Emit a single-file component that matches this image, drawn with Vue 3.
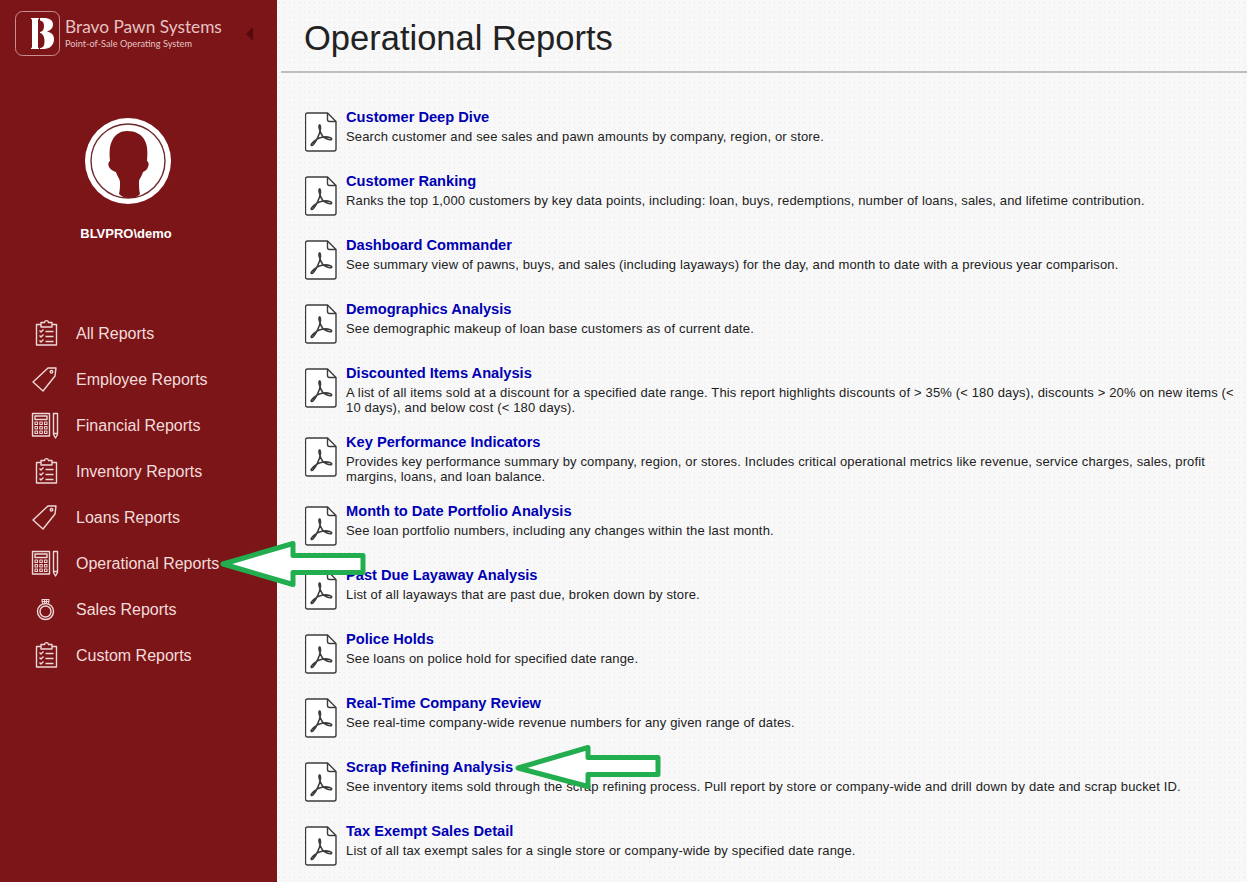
<template>
  <div class="layout">
    <aside class="sidebar">
      <div class="brand">
        <svg class="logo" viewBox="0 0 45 45">
          <rect x="0.500" y="0.500" width="44" height="44" rx="7" fill="none" stroke="#c98f90" />
          <path d="M16 7h8v1l-1 .5v28l1 .5v1h-8v-1l1-.5v-28l-1-.5z" fill="#fff" />
          <path
            d="M25 7h3.500c6.500 0 9.500 2.500 9.500 6.500 0 3.500-2.500 6-6 7 4.500.8 7 3.500 7 7.500 0 6-4 10-10.500 10H25v-1c3 0 4.500-2 4.500-7 0-4-1.500-7.500-4.500-8v-1c3-.5 4-3 4-6 0-3-1-5-4-5.500z"
            fill="#fff"
          />
        </svg>
        <div class="brand-text">
          <div class="brand-name">Bravo Pawn Systems</div>
          <div class="brand-sub">Point-of-Sale Operating System</div>
        </div>
        <span class="collapse"></span>
      </div>

      <div class="user">
        <svg class="avatar" viewBox="0 0 86 86">
          <circle cx="43" cy="43" r="43" fill="#fff" />
          <circle cx="43" cy="43" r="37" fill="#fff" stroke="#6d2a2c" stroke-width="1.400" />
          <path
            d="M42 13c8 0 15 3 18 10 2 4 3 9 2 20 2 1 2 4 1 6-1 3-3 4-5 5-1 4-4 7-4 10 0 4 0 8 1 12-3 3-6 4-10 4s-8-1-11-4c1-4 1-8 1-12 0-3-3-6-4-10-3-1-5-2-7-5-1-2-1-5 1-6-1-11 0-16 2-20 3-7 9-10 15-10z"
            fill="#7b1518"
          />
        </svg>
        <div class="username">BLVPRO\demo</div>
      </div>

      <nav class="nav">
        <a v-for="item in navItems" :key="item.label" class="nav-item">
          <svg class="nav-icon" viewBox="0 0 32 32" fill="none" stroke="#f0d8d8" stroke-width="1.400" stroke-linejoin="round">
            <template v-if="item.icon === 'list'">
              <path d="M11 6.500H6.500V27h20V6.500H22" />
              <path d="M11 4.500h3.500c.5-2.500 3.500-2.500 4 0H22V9H11z" />
              <path d="M9.500 12.500l1.500 1.500 2.500-2.500M9.500 17.500l1.500 1.500 2.500-2.500M9.500 22.500l1.500 1.500 2.500-2.500M15.500 13.500h8M15.500 18.500h8M15.500 23.500h8" />
            </template>
            <template v-else-if="item.icon === 'tag'">
              <path d="M3 18L18 4l8 0-1 8L13 27z" />
              <circle cx="21.500" cy="7.800" r="1.300" />
            </template>
            <template v-else-if="item.icon === 'calc'">
              <rect x="2.500" y="3.500" width="17" height="22.500" />
              <rect x="5" y="6" width="12" height="3.500" />
              <path
                d="M5 12h2.500v2.500H5zM9.800 12h2.500v2.500H9.800zM14.500 12H17v2.500h-2.500zM5 16.500h2.500V19H5zM9.800 16.500h2.500V19H9.800zM14.500 16.500H17V19h-2.500zM5 21h2.500v2.500H5zM9.800 21h2.500v2.500H9.800zM14.500 21H17v2.500h-2.500z"
                stroke-width="1.100"
              />
              <path d="M23.500 3.500h4v21l-2 3.500-2-3.500zM23.500 23.500h4" />
            </template>
            <template v-else>
              <circle cx="15.500" cy="17.500" r="8" />
              <circle cx="15.500" cy="17.500" r="5.500" />
              <path d="M12.500 9.500l-.5-4h7l-.5 4M11.500 7.500h8M14.500 5.500v4M16.500 5.500v4" stroke-width="1.100" />
            </template>
          </svg>
          <span>{{ item.label }}</span>
        </a>
      </nav>
    </aside>

    <main class="main">
      <header class="page-head">
        <h1 class="page-title">Operational Reports</h1>
      </header>

      <ul class="reports">
        <li v-for="r in reports" :key="r.title" class="report">
          <svg class="pdf" viewBox="0 0 32 40">
            <path
              d="M2.500 1h20L31 9.500V37a2 2 0 0 1-2 2H2.500a2 2 0 0 1-2-2V3a2 2 0 0 1 2-2z"
              fill="#fff"
              stroke="#3c3c3c"
              stroke-width="1.400"
            />
            <path d="M22.500 1v6.500a2 2 0 0 0 2 2H31" fill="none" stroke="#3c3c3c" stroke-width="1.400" />
            <path
              d="M14.500 13c-1.500 1 .5 7 3 11 2 2.500 7 4.500 9 3.500 1-1.500-3-3-8-2.500-5 .5-10 4.500-12 7-1 1.500.5 2 1.500 1 3-3 7-11 7.500-16.500 0-2-.5-4-1-3.500z"
              fill="none"
              stroke="#3c3c3c"
              stroke-width="1.600"
              stroke-linejoin="round"
            />
          </svg>
          <div class="report-text">
            <a class="report-title">{{ r.title }}</a>
            <p class="report-desc">{{ r.desc }}</p>
          </div>
        </li>
      </ul>
    </main>

    <!-- annotation arrows drawn over the screenshot -->
    <svg class="arrow arrow-nav" viewBox="0 0 144 46">
      <path d="M2 23L72 2.500v12h70v17H72v12z" fill="#fff" stroke="#22ad4e" stroke-width="5" stroke-linejoin="round" />
    </svg>
    <svg class="arrow arrow-scrap" viewBox="0 0 144 46">
      <path d="M2 23L72 2.500v10h70v17H72v12z" fill="#fff" stroke="#22ad4e" stroke-width="5" stroke-linejoin="round" />
    </svg>
  </div>
</template>

<script setup>
const navItems = [
  { label: 'All Reports', icon: 'list' },
  { label: 'Employee Reports', icon: 'tag' },
  { label: 'Financial Reports', icon: 'calc' },
  { label: 'Inventory Reports', icon: 'list' },
  { label: 'Loans Reports', icon: 'tag' },
  { label: 'Operational Reports', icon: 'calc' },
  { label: 'Sales Reports', icon: 'ring' },
  { label: 'Custom Reports', icon: 'list' },
]

const reports = [
  { title: 'Customer Deep Dive', desc: 'Search customer and see sales and pawn amounts by company, region, or store.' },
  { title: 'Customer Ranking', desc: 'Ranks the top 1,000 customers by key data points, including: loan, buys, redemptions, number of loans, sales, and lifetime contribution.' },
  { title: 'Dashboard Commander', desc: 'See summary view of pawns, buys, and sales (including layaways) for the day, and month to date with a previous year comparison.' },
  { title: 'Demographics Analysis', desc: 'See demographic makeup of loan base customers as of current date.' },
  { title: 'Discounted Items Analysis', desc: 'A list of all items sold at a discount for a specified date range. This report highlights discounts of > 35% (< 180 days), discounts > 20% on new items (< 10 days), and below cost (< 180 days).' },
  { title: 'Key Performance Indicators', desc: 'Provides key performance summary by company, region, or stores. Includes critical operational metrics like revenue, service charges, sales, profit margins, loans, and loan balance.' },
  { title: 'Month to Date Portfolio Analysis', desc: 'See loan portfolio numbers, including any changes within the last month.' },
  { title: 'Past Due Layaway Analysis', desc: 'List of all layaways that are past due, broken down by store.' },
  { title: 'Police Holds', desc: 'See loans on police hold for specified date range.' },
  { title: 'Real-Time Company Review', desc: 'See real-time company-wide revenue numbers for any given range of dates.' },
  { title: 'Scrap Refining Analysis', desc: 'See inventory items sold through the scrap refining process. Pull report by store or company-wide and drill down by date and scrap bucket ID.' },
  { title: 'Tax Exempt Sales Detail', desc: 'List of all tax exempt sales for a single store or company-wide by specified date range.' },
]
</script>

<style>
html,
body {
  margin: 0;
  height: 100%;
  overflow: hidden;
}
</style>

<style scoped>
.layout {
  position: relative;
  display: flex;
  height: 882px;
  overflow: hidden;
  font-family: 'Liberation Sans', Arial, sans-serif;
}

.sidebar {
  width: 277px;
  flex-shrink: 0;
  background-color: #7b1518;
  color: #f3dcdc;
}

.brand {
  display: flex;
  align-items: center;
  height: 45px;
  padding: 11px 0 0 15px;
}

.logo {
  width: 45px;
  height: 45px;
  flex-shrink: 0;
}

.brand-text {
  margin-left: 5px;
  font-family: Lato, sans-serif;
  color: #e6c3c3;
  width: 181px;
}

.brand-name {
  font-size: 17.300px;
  line-height: 22px;
}

.brand-sub {
  font-size: 9.200px;
  line-height: 14px;
  margin-top: -1px;
}

.collapse {
  width: 0;
  height: 0;
  border-style: solid;
  border-width: 7px 7px 7px 0;
  border-color: transparent #56090c transparent transparent;
}

.user {
  display: flex;
  flex-direction: column;
  align-items: center;
  margin-top: 62px;
  padding-right: 21px;
}

.avatar {
  width: 86px;
  height: 86px;
}

.username {
  margin-top: 22px;
  margin-right: 4px;
  font-size: 13px;
  font-weight: 700;
  line-height: 16px;
  color: #fff;
}

.nav {
  display: flex;
  flex-direction: column;
  margin-top: 69px;
}

.nav-item {
  display: flex;
  align-items: center;
  height: 46px;
  padding-left: 30px;
  font-size: 16px;
}

.nav-icon {
  width: 32px;
  height: 32px;
  margin-right: 14px;
  flex-shrink: 0;
}

.main {
  flex: 1;
  min-width: 0;
  background-color: #f8f8f8;
  background-image: radial-gradient(#e6e6e6 0.8px, transparent 1px);
  background-size: 5px 5px;
}

.page-head {
  height: 71px;
  margin-left: 4px;
  border-bottom: 2px solid #bdbdbd;
}

.page-title {
  margin: 0;
  padding: 18px 0 0 23px;
  font-size: 34.500px;
  font-weight: 400;
  line-height: 40px;
  color: #222;
}

.reports {
  list-style: none;
  margin: 0;
  padding: 25px 6px 0 28px;
}

.report {
  display: flex;
  min-height: 64px;
  box-sizing: border-box;
  padding: 9px 0 8.500px;
}

.pdf {
  width: 32px;
  height: 40px;
  flex-shrink: 0;
  margin-top: 5px;
}

.report-text {
  margin-left: 9px;
  min-width: 0;
}

.report-title {
  display: block;
  font-size: 14.650px;
  font-weight: 700;
  line-height: 20px;
  color: #0000b4;
}

.report-desc {
  margin: 1.500px 0 0;
  font-size: 13px;
  letter-spacing: 0.150px;
  line-height: 15px;
  color: #222;
}

.arrow {
  position: absolute;
  overflow: visible;
}

.arrow-nav {
  left: 221px;
  top: 541px;
  width: 144px;
  height: 46px;
}

.arrow-scrap {
  left: 516px;
  top: 745px;
  width: 144px;
  height: 46px;
}
</style>
